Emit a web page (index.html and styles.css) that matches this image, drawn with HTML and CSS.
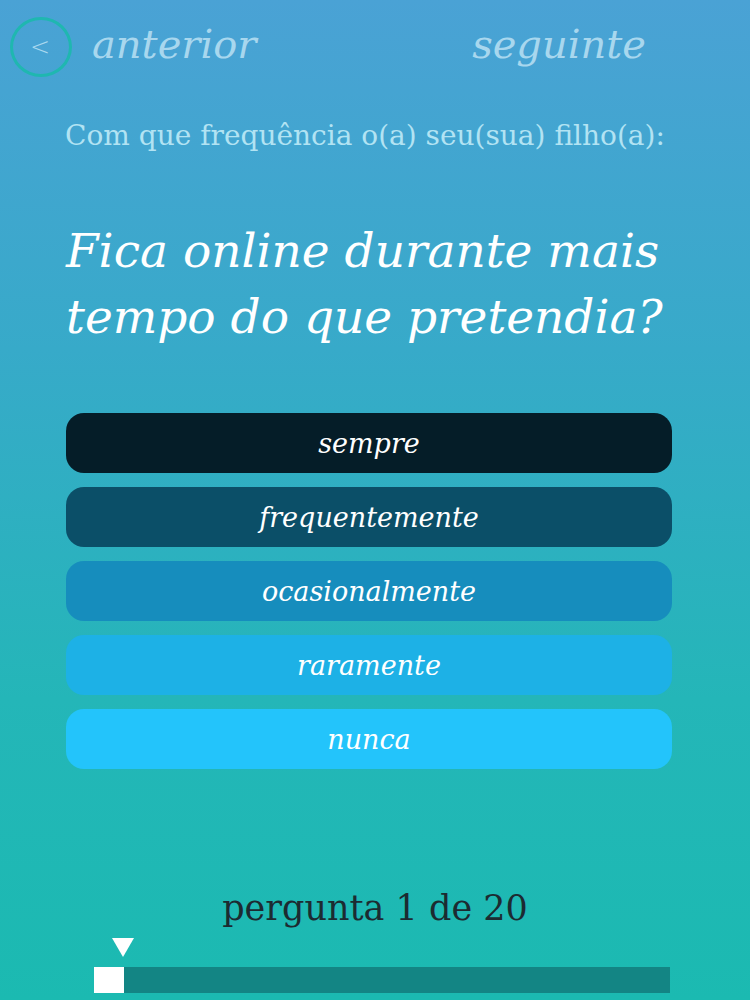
FILE: index.html
```html
<!DOCTYPE html>
<html lang="pt">
<head>
<meta charset="UTF-8">
<meta name="viewport" content="width=device-width, initial-scale=1.0">
<title>Questionário</title>
<link rel="stylesheet" href="styles.css">
</head>
<body>

<div class="screen">
  <div class="nav">
    <div class="nav-left">
      <span class="back-circle">&lt;</span>
      <a href="#" class="nav-link">anterior</a>
    </div>
    <a href="#" class="nav-link">seguinte</a>
  </div>

  <p class="intro">Com que frequência o(a) seu(sua) filho(a):</p>

  <h1 class="question">Fica online durante mais tempo do que pretendia?</h1>

  <div class="answers">
    <button class="answer a1">sempre</button>
    <button class="answer a2">frequentemente</button>
    <button class="answer a3">ocasionalmente</button>
    <button class="answer a4">raramente</button>
    <button class="answer a5">nunca</button>
  </div>

  <div class="footer">
    <p class="counter">pergunta 1 de 20</p>
    <div class="progress">
      <span class="marker"></span>
      <div class="track">
        <span class="fill"></span>
      </div>
    </div>
  </div>
</div>

</body>
</html>
```

FILE: styles.css
```css
body {
  margin: 0;
  font-family: 'DejaVu Serif', 'Liberation Serif', serif;
  background: linear-gradient(180deg, #4aa2d5 0%, #37aac9 35%, #24b6b8 70%, #1bbab1 100%);
  height: 1000px;
  overflow: hidden;
}

.screen {
  display: flex;
  flex-direction: column;
  height: 1000px;
}

.nav {
  display: flex;
  justify-content: space-between;
  align-items: center;
  padding: 17px 104px 0 10px;
  height: 60px;
}

.nav-left {
  display: flex;
  align-items: center;
  gap: 20px;
}

.back-circle {
  width: 54px;
  height: 54px;
  border: 3px solid #1fb7b0;
  border-radius: 50%;
  display: flex;
  align-items: center;
  justify-content: center;
  color: #a9d8ef;
  font-family: 'DejaVu Sans', sans-serif;
  font-size: 24px;
  font-weight: 300;
  padding-right: 2px;
  box-sizing: content-box;
}

.nav-link {
  color: #a8d7ee;
  font-style: italic;
  font-size: 40px;
  text-decoration: none;
  margin-top: -6px;
}

.intro {
  margin: 42px 0 0 65px;
  color: #b2e3f3;
  font-size: 28px;
}

.question {
  margin: 66px 40px 0 66px;
  color: #fff;
  font-style: italic;
  font-weight: normal;
  font-size: 47px;
  line-height: 66px;
}

.answers {
  display: flex;
  flex-direction: column;
  gap: 14px;
  margin: 63px 78px 0 66px;
}

.answer {
  height: 60px;
  border: none;
  border-radius: 18px;
  color: #fff;
  font-family: inherit;
  font-style: italic;
  font-size: 27px;
  cursor: pointer;
}

.a1 { background: #051d28; }
.a2 { background: #0b4f68; }
.a3 { background: #168dbd; }
.a4 { background: #1db1e6; }
.a5 { background: #23c4fb; }

.footer {
  margin-top: auto;
  padding-bottom: 7px;
}

.counter {
  margin: 0;
  text-align: center;
  color: #1c2b31;
  font-size: 35px;
}

.progress {
  margin: 10px 80px 0 94px;
}

.marker {
  display: block;
  width: 0;
  height: 0;
  margin-left: 18px;
  border-left: 11px solid transparent;
  border-right: 11px solid transparent;
  border-top: 19px solid #fff;
}

.track {
  margin-top: 10px;
  height: 26px;
  background: #138584;
}

.fill {
  display: block;
  width: 30px;
  height: 100%;
  background: #fff;
}
```
